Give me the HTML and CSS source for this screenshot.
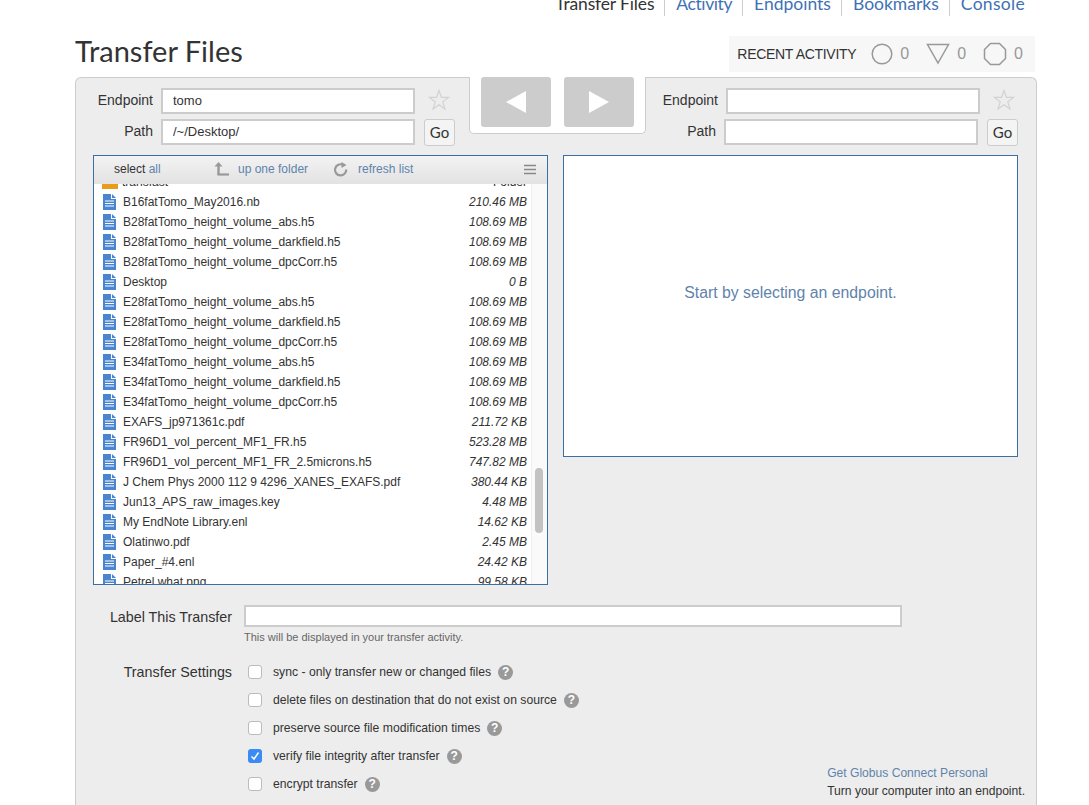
FILE: index.html
```html
<!DOCTYPE html>
<html>
<head>
    <title>Transfer Files</title>
    <link rel="stylesheet" href="styles.css">
</head>
<body>
    <svg class="defs" width="0" height="0">
        <symbol id="file-icon" viewBox="0 0 13 16">
            <path d="M0 0H8V5H13V16H0Z" fill="#4a86d0"/>
            <path d="M9 0L13 4H9Z" fill="#4a86d0"/>
            <path d="M2 7H11M2 9.5H11M2 12H11" stroke="#fff" stroke-width="1"/>
        </symbol>
        <symbol id="star-icon" viewBox="0 0 22 22">
            <path d="M11 1.5L13.4 8.4H20.6L14.8 12.8L16.9 20L11 15.7L5.1 20L7.2 12.8L1.4 8.4H8.6Z" fill="none" stroke="#d2d2d2" stroke-width="1.2"/>
        </symbol>
    </svg>

    <div class="page">
        <nav class="top-nav">
            <a class="current">Transfer Files</a>
            <a class="nav-activity">Activity</a>
            <a>Endpoints</a>
            <a>Bookmarks</a>
            <a class="nav-console">Console</a>
        </nav>

        <div class="page-head">
            <h1>Transfer Files</h1>
            <div class="recent">
                <span class="recent-title">RECENT ACTIVITY</span>
                <svg width="22" height="22" viewBox="0 0 22 22"><circle cx="11" cy="11" r="9.8" fill="none" stroke="#999" stroke-width="1.5"/></svg>
                <span class="recent-count">0</span>
                <svg width="24" height="22" viewBox="0 0 24 22"><path d="M1.5 1.5H22.5L12 20Z" fill="none" stroke="#999" stroke-width="1.5"/></svg>
                <span class="recent-count">0</span>
                <svg width="24" height="24" viewBox="0 0 24 24"><path d="M7.5 1.5H16.5L22.5 7.5V16.5L16.5 22.5H7.5L1.5 16.5V7.5Z" fill="none" stroke="#999" stroke-width="1.5"/></svg>
                <span class="recent-count">0</span>
            </div>
        </div>

        <div class="panel">
            <div class="endpoints">
                <div class="endpoint endpoint-left">
                    <div class="field">
                        <label>Endpoint</label>
                        <input type="text" value="tomo">
                        <svg class="star" width="22" height="22"><use href="#star-icon"/></svg>
                    </div>
                    <div class="field">
                        <label>Path</label>
                        <input type="text" value="/~/Desktop/">
                        <button type="button">Go</button>
                    </div>
                </div>

                <div class="arrows">
                    <div class="arrow"><svg width="20" height="22" viewBox="0 0 20 22"><path d="M20 0V22L0 11Z" fill="#fff"/></svg></div>
                    <div class="arrow"><svg width="20" height="22" viewBox="0 0 20 22"><path d="M0 0V22L20 11Z" fill="#fff"/></svg></div>
                </div>

                <div class="endpoint endpoint-right">
                    <div class="field">
                        <label>Endpoint</label>
                        <input type="text">
                        <svg class="star" width="22" height="22"><use href="#star-icon"/></svg>
                    </div>
                    <div class="field field-short">
                        <label>Path</label>
                        <input type="text">
                        <button type="button">Go</button>
                    </div>
                </div>
            </div>

            <div class="browsers">
                <div class="browser">
                    <div class="browser-bar">
                        <span class="select-all">select <a>all</a></span>
                        <svg class="up-icon" width="15" height="14" viewBox="0 0 15 14"><path d="M4.5 13V2" stroke="#999" stroke-width="2.4" fill="none"/><path d="M4.5 0L8.5 4.5H0.5Z" fill="#999"/><path d="M3.5 12.5H15" stroke="#999" stroke-width="2.2" fill="none"/></svg>
                        <a class="bar-link">up one folder</a>
                        <svg class="refresh-icon" width="15" height="15" viewBox="0 0 15 15"><path d="M9.5 2.6A5.6 5.6 0 1 0 13.2 7.5" stroke="#999" stroke-width="2.2" fill="none"/><path d="M8.5 0L13.5 3L8.5 6Z" fill="#999"/></svg>
                        <a class="bar-link">refresh list</a>
                        <svg class="menu-icon" width="12" height="11" viewBox="0 0 12 11"><path d="M0 1.5H12M0 5.5H12M0 9.5H12" stroke="#888" stroke-width="1.6"/></svg>
                    </div>
                    <div class="file-view">
                        <ul class="file-list">
                            <li><span class="folder-icon"></span><span class="name">transfast</span><span class="size plain">Folder</span></li>
                            <li><svg class="file" width="13" height="16"><use href="#file-icon"/></svg><span class="name">B16fatTomo_May2016.nb</span><span class="size">210.46 MB</span></li>
                            <li><svg class="file" width="13" height="16"><use href="#file-icon"/></svg><span class="name">B28fatTomo_height_volume_abs.h5</span><span class="size">108.69 MB</span></li>
                            <li><svg class="file" width="13" height="16"><use href="#file-icon"/></svg><span class="name">B28fatTomo_height_volume_darkfield.h5</span><span class="size">108.69 MB</span></li>
                            <li><svg class="file" width="13" height="16"><use href="#file-icon"/></svg><span class="name">B28fatTomo_height_volume_dpcCorr.h5</span><span class="size">108.69 MB</span></li>
                            <li><svg class="file" width="13" height="16"><use href="#file-icon"/></svg><span class="name">Desktop</span><span class="size">0 B</span></li>
                            <li><svg class="file" width="13" height="16"><use href="#file-icon"/></svg><span class="name">E28fatTomo_height_volume_abs.h5</span><span class="size">108.69 MB</span></li>
                            <li><svg class="file" width="13" height="16"><use href="#file-icon"/></svg><span class="name">E28fatTomo_height_volume_darkfield.h5</span><span class="size">108.69 MB</span></li>
                            <li><svg class="file" width="13" height="16"><use href="#file-icon"/></svg><span class="name">E28fatTomo_height_volume_dpcCorr.h5</span><span class="size">108.69 MB</span></li>
                            <li><svg class="file" width="13" height="16"><use href="#file-icon"/></svg><span class="name">E34fatTomo_height_volume_abs.h5</span><span class="size">108.69 MB</span></li>
                            <li><svg class="file" width="13" height="16"><use href="#file-icon"/></svg><span class="name">E34fatTomo_height_volume_darkfield.h5</span><span class="size">108.69 MB</span></li>
                            <li><svg class="file" width="13" height="16"><use href="#file-icon"/></svg><span class="name">E34fatTomo_height_volume_dpcCorr.h5</span><span class="size">108.69 MB</span></li>
                            <li><svg class="file" width="13" height="16"><use href="#file-icon"/></svg><span class="name">EXAFS_jp971361c.pdf</span><span class="size">211.72 KB</span></li>
                            <li><svg class="file" width="13" height="16"><use href="#file-icon"/></svg><span class="name">FR96D1_vol_percent_MF1_FR.h5</span><span class="size">523.28 MB</span></li>
                            <li><svg class="file" width="13" height="16"><use href="#file-icon"/></svg><span class="name">FR96D1_vol_percent_MF1_FR_2.5microns.h5</span><span class="size">747.82 MB</span></li>
                            <li><svg class="file" width="13" height="16"><use href="#file-icon"/></svg><span class="name">J Chem Phys 2000 112 9 4296_XANES_EXAFS.pdf</span><span class="size">380.44 KB</span></li>
                            <li><svg class="file" width="13" height="16"><use href="#file-icon"/></svg><span class="name">Jun13_APS_raw_images.key</span><span class="size">4.48 MB</span></li>
                            <li><svg class="file" width="13" height="16"><use href="#file-icon"/></svg><span class="name">My EndNote Library.enl</span><span class="size">14.62 KB</span></li>
                            <li><svg class="file" width="13" height="16"><use href="#file-icon"/></svg><span class="name">Olatinwo.pdf</span><span class="size">2.45 MB</span></li>
                            <li><svg class="file" width="13" height="16"><use href="#file-icon"/></svg><span class="name">Paper_#4.enl</span><span class="size">24.42 KB</span></li>
                            <li><svg class="file" width="13" height="16"><use href="#file-icon"/></svg><span class="name">Petrel what.png</span><span class="size">99.58 KB</span></li>
                        </ul>
                        <div class="scrollbar"><div class="scroll-thumb"></div></div>
                    </div>
                </div>

                <div class="browser browser-empty">
                    <p>Start by selecting an endpoint.</p>
                </div>
            </div>

            <div class="label-row">
                <label>Label This Transfer</label>
                <input type="text">
            </div>
            <p class="label-hint">This will be displayed in your transfer activity.</p>

            <div class="settings">
                <div class="settings-title">Transfer Settings</div>
                <div class="settings-list">
                    <div class="setting"><span class="check"></span>sync - only transfer new or changed files<span class="help">?</span></div>
                    <div class="setting"><span class="check"></span>delete files on destination that do not exist on source<span class="help">?</span></div>
                    <div class="setting"><span class="check"></span>preserve source file modification times<span class="help">?</span></div>
                    <div class="setting"><span class="check checked"><svg width="14" height="14" viewBox="0 0 14 14"><path d="M3.5 7.5L6 10L10.5 3.5" fill="none" stroke="#fff" stroke-width="1.5"/></svg></span>verify file integrity after transfer<span class="help">?</span></div>
                    <div class="setting"><span class="check"></span>encrypt transfer<span class="help">?</span></div>
                </div>
                <div class="connect">
                    <a>Get Globus Connect Personal</a>
                    <div>Turn your computer into an endpoint.</div>
                </div>
            </div>
        </div>
    </div>
</body>
</html>
```

FILE: styles.css
```css
html, body {
    height: 805px;
    overflow: hidden;
}

body {
    margin: 0;
    background-color: #ffffff;
    color: #333;
    font-family: "Liberation Sans", Arial, sans-serif;
    font-size: 12px;
}

.defs {
    display: block;
    height: 0;
}

.page {
    width: 962px;
    margin-left: 75px;
}

.top-nav {
    display: flex;
    justify-content: flex-end;
    height: 16px;
    padding-right: 2px;
    font-family: Lato, sans-serif;
    font-size: 17.5px;
    line-height: 8px;
}

.top-nav a {
    padding: 0 10px 0 11px;
    border-left: 1px solid #ccc;
    color: #3f72b5;
}

.top-nav a.current {
    border-left: none;
    color: #333;
    letter-spacing: -0.15px;
}

.top-nav a.nav-activity {
    letter-spacing: -0.4px;
}

.top-nav a.nav-console {
    padding-right: 10px;
    letter-spacing: 0.3px;
}

.page-head {
    display: flex;
    justify-content: space-between;
    align-items: center;
    height: 36px;
    padding: 20px 2px 5px 0;
}

h1 {
    margin: 0 0 6px;
    font-family: Lato, sans-serif;
    font-size: 29px;
    font-weight: 400;
    line-height: 36px;
    color: #333;
}

.recent {
    display: flex;
    align-items: center;
    height: 36px;
    padding: 0 12px 0 8px;
    background-color: #f7f7f7;
}

.recent-title {
    margin-right: 15px;
    font-size: 14px;
    letter-spacing: -0.3px;
}

.recent-count {
    margin: 0 17px 0 7px;
    font-size: 16px;
    color: #999;
}

.recent-count:last-child {
    margin-right: 0;
}

.panel {
    border: 1px solid #ccc;
    border-bottom: none;
    border-radius: 6px 6px 0 0;
    background-color: #ededed;
    padding-bottom: 40px;
}

.endpoints {
    display: flex;
}

.endpoint {
    padding-top: 10px;
}

.endpoint-left {
    width: 393px;
}

.endpoint-right {
    width: 390px;
}

.field {
    display: flex;
    align-items: flex-start;
    height: 26px;
    margin-bottom: 5px;
}

.field label {
    flex: none;
    width: 77px;
    margin-right: 8px;
    text-align: right;
    font-size: 14px;
    line-height: 25px;
}

.endpoint-right .field label {
    width: 72px;
}

.endpoint-right .field-short label {
    width: 70px;
}

input[type="text"] {
    box-sizing: border-box;
    width: 254px;
    height: 26px;
    margin: 0;
    padding: 0 10px 2px;
    border: 2px solid #ccc;
    background-color: #fff;
    color: #333;
    font-family: "Liberation Sans", Arial, sans-serif;
    font-size: 13px;
}

.star {
    margin: 1px 0 0 13px;
}

button {
    width: 31px;
    height: 27px;
    margin-left: 9px;
    padding: 0 0 2px;
    border: 1px solid #ccc;
    border-radius: 3px;
    background-color: #f4f4f4;
    color: #333;
    font-family: Lato, sans-serif;
    font-size: 15px;
}

.arrows {
    box-sizing: border-box;
    display: flex;
    gap: 13px;
    width: 177px;
    height: 57px;
    margin-top: -1px;
    padding: 0 11px;
    border: 1px solid #ccc;
    border-top: none;
    border-radius: 0 0 5px 5px;
    background-color: #fff;
}

.arrow {
    display: flex;
    align-items: center;
    justify-content: center;
    width: 70px;
    height: 50px;
    border-radius: 3px;
    background-color: #ccc;
}

.browsers {
    display: flex;
    align-items: flex-start;
    gap: 15px;
    padding: 5px 0 0 17px;
}

.browser {
    box-sizing: border-box;
    width: 455px;
    height: 430px;
    border: 1px solid #3b6ea5;
    background-color: #fff;
}

.browser-empty {
    display: flex;
    align-items: center;
    justify-content: center;
    height: 302px;
}

.browser-empty p {
    margin: 0 0 26px;
    font-size: 15.8px;
    color: #5f83ab;
}

.browser-bar {
    display: flex;
    align-items: center;
    height: 28px;
    padding: 0 0 2px 20px;
    box-sizing: border-box;
    background: linear-gradient(#f3f3f3, #e2e2e2);
}

.select-all {
    width: 100px;
}

.browser-bar a {
    color: #5f83ab;
}

.up-icon {
    margin-right: 9px;
}

.bar-link {
    margin-right: 25px;
}

.refresh-icon {
    margin-right: 10px;
}

.menu-icon {
    margin-left: auto;
    margin-right: 11px;
}

.file-view {
    position: relative;
    height: 400px;
    overflow: hidden;
}

.file-list {
    margin: -12px 0 0;
    padding: 0 20px 0 9px;
    list-style: none;
}

.file-list li {
    display: flex;
    align-items: center;
    height: 20px;
}

.file {
    flex: none;
    margin-right: 7px;
}

.folder-icon {
    flex: none;
    width: 16px;
    height: 13px;
    margin: 0 4px 0 -1px;
    background-color: #ea9a1c;
}

.name {
    flex: 1;
    color: #333;
}

.size {
    font-style: italic;
}

.size.plain {
    font-style: normal;
}

.scrollbar {
    position: absolute;
    top: 0;
    right: 0;
    bottom: 0;
    width: 15px;
    border-left: 1px solid #eee;
    background-color: #fafafa;
}

.scroll-thumb {
    width: 8px;
    height: 65px;
    margin: 284px 0 0 3px;
    border-radius: 4px;
    background-color: #c2c2c2;
}

.label-row {
    display: flex;
    align-items: center;
    margin-top: 20px;
}

.label-row label {
    width: 156px;
    margin-right: 12px;
    padding-top: 2px;
    text-align: right;
    font-size: 14.3px;
}

.label-row input[type="text"] {
    width: 658px;
    height: 22px;
}

.label-hint {
    margin: 4px 0 0 168px;
    height: 13px;
    font-size: 11px;
    line-height: 13px;
    color: #666;
}

.settings {
    display: flex;
    margin-top: 14px;
}

.settings-title {
    width: 156px;
    text-align: right;
    font-size: 14.3px;
    line-height: 28px;
}

.settings-list {
    margin-left: 16px;
    font-size: 12.2px;
}

.setting {
    display: flex;
    align-items: center;
    height: 28px;
}

.check {
    box-sizing: border-box;
    width: 14px;
    height: 14px;
    margin-right: 11px;
    border: 1px solid #bbb;
    border-radius: 3px;
    background-color: #fff;
}

.check.checked {
    border: none;
    background-color: #3b8bf5;
}

.check svg {
    display: block;
}

.help {
    width: 15px;
    height: 15px;
    margin-left: 7px;
    border-radius: 50%;
    background-color: #999;
    color: #fff;
    font-size: 12px;
    font-weight: 700;
    line-height: 15px;
    text-align: center;
}

.connect {
    align-self: flex-end;
    margin: 0 11px -2px auto;
    font-size: 12.1px;
    line-height: 17.5px;
}

.connect a {
    color: #5f83ab;
}
```
